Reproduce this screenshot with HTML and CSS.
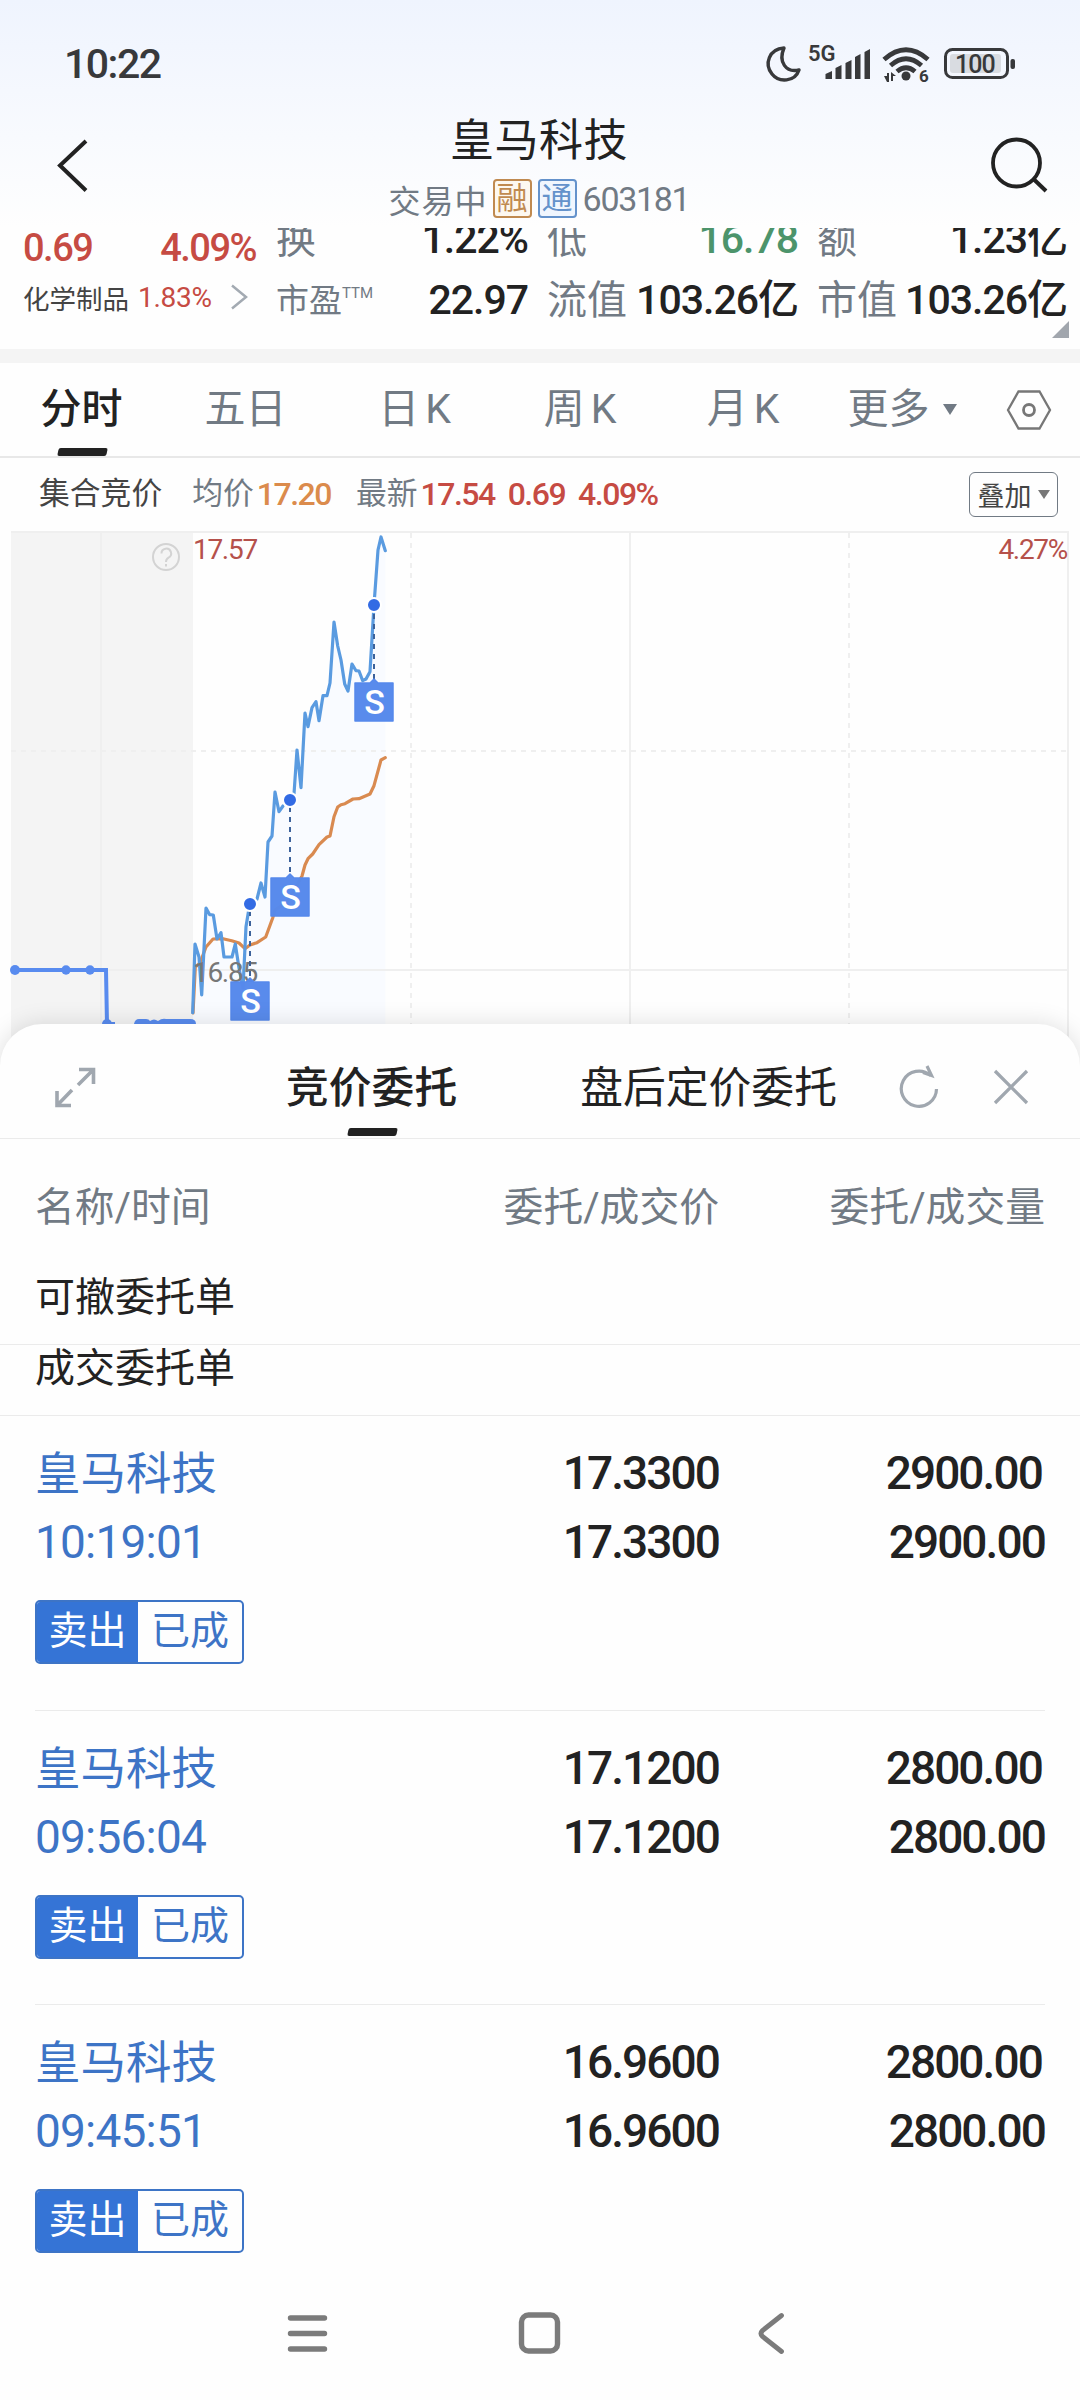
FILE: index.html
```html
<!DOCTYPE html>
<html lang="zh-CN">
<head>
    <meta charset="UTF-8">
    <meta name="viewport" content="width=device-width, initial-scale=1.0">
    <title>皇马科技 603181</title>
    <link rel="stylesheet" href="styles.css">
</head>
<body>
<div class="phone">
    <header class="top">
        <div class="status">
            <span class="clock">10:22</span>
            <svg class="status-icons" width="256" height="44" viewBox="762 41 256 44">
                <path d="M784 47c-6 14 2 25 15 22c-4 12-20 13-27 4c-8-10-3-25 12-26z" fill="none" stroke="#38393b" stroke-width="3.4" stroke-linejoin="round"/>
                <text x="808" y="60" class="net">5G</text>
                <g fill="#38393b">
                    <path d="M825.500 78v-5l6.500-3v8zM835.500 78v-11l6-3v14zM845.500 78v-16l6-3v19zM855 78v-22l5.500-3v25zM864.500 78v-27l5.500-3v30z"/>
                    <circle cx="906" cy="75" r="4.500"/>
                    <path d="M884 75h3v-3h2v9h-2zM891 80v-9l5 4h-3v5z"/>
                    <rect x="1010.500" y="58" width="4.500" height="10" rx="2"/>
                </g>
                <g fill="none" stroke="#38393b" stroke-width="4.800">
                    <path d="M884 58.500Q906 39 928 58.500"/>
                    <path d="M890.500 64.500Q906 51 921.500 64.500"/>
                    <path d="M897 70.500Q906 63 915 70.500"/>
                </g>
                <text x="919" y="81" class="gen">6</text>
                <rect x="945.500" y="48.500" width="62" height="28" rx="7" fill="none" stroke="#38393b" stroke-width="3"/>
                <rect x="950" y="53" width="51" height="19" rx="3" fill="#d9dce1"/>
                <text x="955" y="71.500" class="batt">100</text>
            </svg>
        </div>
        <div class="titlebar">
            <svg class="back" width="34" height="56" viewBox="56 138 34 56"><path d="M86 141L60 165.500L86 190.500" fill="none" stroke="#222" stroke-width="4"/></svg>
            <div class="title">
                <h1>皇马科技</h1>
                <p>交易中<i class="tag rong">融</i><i class="tag tong">通</i><span class="code">603181</span></p>
            </div>
            <svg class="search" width="60" height="60" viewBox="988 135 60 60"><circle cx="1016.500" cy="163" r="23.500" fill="none" stroke="#222" stroke-width="3.800"/><path d="M1034 179.500L1046 191" stroke="#222" stroke-width="4"/></svg>
        </div>
    </header>

    <section class="quote">
        <div class="change">
            <div class="change-row red"><b>0.69</b><b>4.09%</b></div>
            <div class="sector">
                <span>化学制品</span><em class="red">1.83%</em>
                <svg width="18" height="26" viewBox="0 0 18 26"><path d="M2 1.500L16 13L2 24.500" fill="none" stroke="#a3aab2" stroke-width="2.500"/></svg>
            </div>
        </div>
        <dl class="stats">
            <div><dt>换</dt><dd>1.22%</dd></div>
            <div><dt>低</dt><dd class="green">16.78</dd></div>
            <div><dt>额</dt><dd>1.23亿</dd></div>
            <div><dt class="small">市盈<sup>TTM</sup></dt><dd>22.97</dd></div>
            <div><dt>流值</dt><dd>103.26亿</dd></div>
            <div><dt>市值</dt><dd>103.26亿</dd></div>
        </dl>
        <i class="corner"></i>
    </section>

    <nav class="tabs">
        <a class="active">分时</a>
        <a>五日</a>
        <a>日<s></s>K</a>
        <a>周<s></s>K</a>
        <a>月<s></s>K</a>
        <a class="more">更多<i class="caret"></i></a>
        <svg width="46" height="42" viewBox="0 0 46 42" fill="none" stroke="#777" stroke-width="2.300"><path d="M2 21L12.500 2.500H33.500L44 21L33.500 39.500H12.500Z"/><circle cx="23" cy="21" r="5.500" stroke-width="2.800"/></svg>
    </nav>

    <div class="info">
        <span class="dark">集合竞价</span>
        <span>均价</span><b class="orange">17.20</b>
        <span>最新</span><b class="red">17.54</b><b class="red">0.69</b><b class="red">4.09%</b>
        <button class="overlay">叠加<i class="caret"></i></button>
    </div>

    <svg class="chart" width="1080" height="536" viewBox="0 530 1080 536">
        <rect x="11" y="532" width="182" height="534" fill="#f4f4f4"/>
        <path d="M193 1066V1013L195 944L199 957L201.700 995L206 908L213 915L217 939L224 957H232L235 944L243 988L246 927L250 904L257 899L261 883L265 897L268 842L272 836L275 792L279 812L290 800L294 794L297 750L301 788L305 713L308 727L312 708L316 702L319 721L323 696H327L330 683L334 622L338 646L348 691L352 664L363 681L370 672L374 605L378 550L381 537L385.300 551V1066Z" fill="#f9fbff"/>
        <!-- grid -->
        <g stroke="#efefef" stroke-width="2" fill="none">
            <path d="M11 532H1068V1066M101 532V1066M630 532V1066M11 970H1068"/>
            <path d="M411 533V1066M849 533V1066M11 751H1068" stroke-dasharray="5 5"/>
        </g>
        <g fill="none" stroke="#d3d3d3" stroke-width="2"><circle cx="166" cy="557" r="13"/><path d="M161.500 553.500a4.800 4.800 0 1 1 7 4.200q-2.500 1.500-2.500 4.300M166 564v2.500"/></g>
        <text x="193" y="559" class="axis up">17.57</text>
        <text x="1067" y="559" text-anchor="end" class="axis up">4.27%</text>
        <!-- call auction -->
        <g fill="#588bef">
            <path d="M11 970H106L107 1024" fill="none" stroke="#588bef" stroke-width="4"/>
            <circle cx="15" cy="970" r="5"/><circle cx="66" cy="970" r="4.700"/><circle cx="90" cy="970" r="4.700"/>
            <circle cx="107" cy="1024" r="5"/>
            <path d="M134 1024q1-5 5-5h7q3 0 4 2q4-3 8 0q4-3 8-2h24q6 0 6 5zM109 1022h6v2h-6z"/>
        </g>
        <polyline class="avg" points="193,1013 195.300,967 200,963 206,947 213,939 223,938.700 231.700,940.700 239,943 245,948.700 250,945 257,942.700 265.700,937 272.700,918 275,910 287,902 297,885 302,876 305,865 308,858.700 312.700,854 319,844.700 327,837 330,836 334,816.700 337.700,807 341,804.700 345,803.700 353,799 359,798.700 370,794 374,785.700 381,760 385.300,757.700"/>
        <polyline class="price" points="192.700,1012.700 195,944 199,957 201.700,995 206,908 209.700,914.700 213.300,915 217,939 221,932.700 224,957 232,957 235.300,944 239,968 243,988 246,926.700 249.700,904"/>
        <polyline class="price" points="257,899 261,883 265,897 268,842 272,836 275,792 279,811.700 283,806"/>
        <polyline class="price" points="294,794 297,750 301,787.700 305,713 308,726.700 312,707.700 316,701.700 319,720.700 323,695.700 327,695.700 330,683 334,622 337.700,646 341,660 344.700,684 348,691 352,664 356,670.700 359,671 362.700,680.700 366,679 370,671.700 374,605 378,550 381,537 385.300,550.700"/>
        <text x="193" y="982" class="axis">16.85</text>
        <!-- sell markers -->
        <g class="mark">
            <path d="M374 614V680M290 807V876M250 911V979"/>
            <circle cx="374" cy="605" r="7"/><circle cx="290" cy="800" r="7"/><circle cx="250" cy="904" r="7"/>
            <path class="flag" d="M355 683H370L374 679L378 683H393V721H355ZM271 878H286L290 874L294 878H309V916H271ZM231 982H246L250 978L254 982H269V1020H231Z"/>
            <text x="374.500" y="714">S</text><text x="290.500" y="909">S</text><text x="250.500" y="1013">S</text>
        </g>
    </svg>

    <section class="sheet">
        <div class="sheet-head">
            <svg class="expand" width="42" height="42" viewBox="54 1066 42 42" fill="none" stroke="#a0a7af" stroke-width="3.600"><path d="M79 1069.500H93.500V1084M93 1070L78 1085M57 1091V1105.500H71M57.500 1105L72 1090"/></svg>
            <span class="sheet-tab active">竞价委托</span>
            <span class="sheet-tab">盘后定价委托</span>
            <svg class="refresh" width="42" height="46" viewBox="898 1064 42 46" fill="none" stroke="#a0a7af" stroke-width="3.200"><path d="M936.500 1089A17.600 17.600 0 1 1 930.500 1075.500M927 1066L931.500 1075.500L923 1072.500"/></svg>
            <svg class="close" width="38" height="38" viewBox="0 0 38 38"><path d="M3 3L35 35M35 3L3 35" stroke="#a0a7af" stroke-width="3.300"/></svg>
        </div>
        <div class="cols"><span>名称/时间</span><span>委托/成交价</span><span>委托/成交量</span></div>
        <h2 class="group first">可撤委托单</h2>
        <h2 class="group">成交委托单</h2>

        <div class="order">
            <div class="who"><strong>皇马科技</strong><time>10:19:01</time><div class="badge"><b>卖出</b><span>已成</span></div></div>
            <div class="val"><span>17.3300</span><span>17.3300</span></div>
            <div class="val qty"><span>2900.00</span><span>2900.00</span></div>
        </div>
        <div class="order">
            <div class="who"><strong>皇马科技</strong><time>09:56:04</time><div class="badge"><b>卖出</b><span>已成</span></div></div>
            <div class="val"><span>17.1200</span><span>17.1200</span></div>
            <div class="val qty"><span>2800.00</span><span>2800.00</span></div>
        </div>
        <div class="order">
            <div class="who"><strong>皇马科技</strong><time>09:45:51</time><div class="badge"><b>卖出</b><span>已成</span></div></div>
            <div class="val"><span>16.9600</span><span>16.9600</span></div>
            <div class="val qty"><span>2800.00</span><span>2800.00</span></div>
        </div>
    </section>

    <footer class="navbar">
        <svg width="500" height="50" viewBox="286 2308 500 50" fill="none" stroke="#7b7b7b" stroke-width="5.400" stroke-linecap="round">
            <path d="M290.500 2318H324.500M290.500 2333.500H324.500M290.500 2349H324.500"/>
            <rect x="521.500" y="2315" width="36" height="36" rx="7"/>
            <path d="M781.500 2315.500L762.500 2330.500Q759.500 2333.500 762.500 2336.500L781.500 2351.500" stroke-width="4.800"/>
        </svg>
    </footer>
</div>
</body>
</html>
```
FILE: styles.css
```css
*{
    box-sizing: border-box;
    margin: 0;
    padding: 0;
}
body{
    font-family: Roboto, "Noto Sans CJK SC", sans-serif;
    color: #222;
    background: #fefefe;
}
i, em{
    font-style: normal;
}
svg{
    display: block;
    flex: none;
}
.phone{
    width: 1080px;
    height: 2400px;
    overflow: hidden;
    display: flex;
    flex-direction: column;
}
.red{ color: #c64b43; }
.green{ color: #4c946b; }
.orange{ color: #db8b4c; }

/* status bar and title */
.top{
    height: 228px;
    flex: none;
    background: linear-gradient(#eff4fe, #fefefe);
}
.status{
    height: 102px;
    padding: 25px 62px 0 64px;
    display: flex;
    align-items: center;
    justify-content: space-between;
}
.clock{
    font-size: 41px;
    font-weight: 500;
    letter-spacing: -1.500px;
    color: #38393b;
}
.net{
    font: 600 22px Roboto, sans-serif;
    fill: #38393b;
}
.gen{
    font: 700 17px Roboto, sans-serif;
    fill: #38393b;
}
.batt{
    font: 500 25px Roboto, sans-serif;
    fill: #38393b;
    letter-spacing: -1px;
}
.titlebar{
    height: 126px;
    padding: 0 32px 0 56px;
    display: flex;
    justify-content: space-between;
}
.back{
    margin-top: 36px;
}
.search{
    margin-top: 33px;
}
.title{
    padding-top: 13px;
    text-align: center;
}
.title h1{
    font-size: 44px;
    font-weight: 400;
    line-height: 52px;
    letter-spacing: .5px;
}
.title p{
    display: flex;
    align-items: center;
    height: 63px;
    font-size: 32px;
    letter-spacing: 1px;
    color: #717a84;
}
.tag{
    width: 39px;
    height: 39px;
    border: 2px solid;
    border-radius: 4px;
    font-size: 31px;
    line-height: 35px;
    letter-spacing: 0;
    text-align: center;
}
.rong{
    margin-left: 5px;
    color: #c08a50;
    background: #fdf8f0;
}
.tong{
    margin-left: 6px;
    color: #6492cb;
    background: #f0f6fe;
}
.code{
    font-size: 34px;
    letter-spacing: -1.3px;
    margin-left: 6px;
}

/* quote figures, scrolled partly under the title */
.quote{
    position: relative;
    height: 121px;
    flex: none;
    overflow: hidden;
    display: flex;
    padding-left: 23px;
}
.change{
    width: 253px;
}
.change-row{
    height: 40px;
    width: 233px;
    display: flex;
    justify-content: space-between;
    font-size: 38px;
    line-height: 41px;
    letter-spacing: -1.500px;
}
.change-row b{
    font-weight: 500;
}
.sector{
    display: flex;
    align-items: center;
    height: 58px;
    font-size: 26.500px;
    color: #444;
}
.sector em{
    font-size: 28px;
    letter-spacing: -.3px;
    margin-left: 9px;
    width: 92px;
}
.stats{
    display: grid;
    grid-template-columns: 252px 251px 250px;
    grid-auto-rows: 61px;
    column-gap: 19px;
    margin-top: -19px;
    line-height: 61px;
}
.stats div{
    display: flex;
    justify-content: space-between;
    white-space: nowrap;
}
.stats dt{
    font-size: 40px;
    color: #717a84;
}
.stats dt.small{
    font-size: 33px;
}
.stats sup{
    font-size: 15px;
    vertical-align: 14px;
    line-height: 0;
}
.stats dd{
    font-size: 41px;
    font-weight: 500;
    letter-spacing: -1px;
}
.corner{
    position: absolute;
    right: 11px;
    bottom: 11px;
    border-left: 17px solid transparent;
    border-bottom: 17px solid #a1a6ad;
}

/* period tabs */
.tabs{
    height: 109px;
    flex: none;
    border-top: 14px solid #f4f4f4;
    border-bottom: 2px solid #e8e8e8;
    padding: 0 28px 0 0;
    display: grid;
    grid-template-columns: 163px 165px 173px 158px 168px 150px 1fr;
    align-items: center;
    justify-items: center;
    font-size: 41px;
    color: #717a84;
    line-height: 93px;
}
.tabs a{
    position: relative;
}
.tabs s{
    display: inline-block;
    width: 6px;
}
.tabs .active{
    color: #222;
    font-weight: 500;
}
.tabs .active::after, .sheet-tab.active::after{
    content: "";
    position: absolute;
    left: 50%;
    bottom: 0;
    width: 49px;
    height: 8px;
    margin-left: -24px;
    background: #222;
    border-radius: 2px;
    transform: skewX(-12deg);
}
.tabs svg{
    justify-self: end;
}
.more{
    display: flex;
    align-items: center;
}
.caret{
    border: 7px solid transparent;
    border-top: 11px solid #717a84;
    border-bottom: 0;
    margin-left: 12px;
}
.more .caret{
    margin-left: 13px;
}

.info{
    height: 72px;
    flex: none;
    display: flex;
    align-items: center;
    padding: 0 22px 0 39px;
    font-size: 30.800px;
    line-height: 70px;
    color: #717a84;
}
.info .dark{
    color: #444;
    margin-right: 30px;
}
.info b{
    font-size: 32px;
    font-weight: 500;
    letter-spacing: -1.500px;
    margin-left: 3px;
}
.info .orange{
    margin-right: 25px;
}
.info .red + .red{
    margin-left: 13px;
}
.overlay{
    margin-left: auto;
    width: 89px;
    height: 45px;
    display: flex;
    align-items: center;
    justify-content: center;
    border: 1.500px solid #717a84;
    border-radius: 6px;
    background: none;
    font: 27px Roboto, "Noto Sans CJK SC", sans-serif;
    color: #444;
}
.overlay .caret{
    margin-left: 6px;
    border-width: 9px 6px 0;
    border-top-color: #777;
}

/* intraday chart */
.axis{
    font: 28px Roboto, sans-serif;
    letter-spacing: -1.300px;
    fill: #777;
}
.up{
    fill: #b5514b;
}
.avg, .price{
    fill: none;
    stroke-width: 3.200;
    stroke-linejoin: round;
    stroke-linecap: round;
}
.avg{ stroke: #d98a50; }
.price{ stroke: #5a9be0; }
.mark path{
    stroke: #3c629b;
    stroke-width: 2;
    stroke-dasharray: 5 5;
}
.mark circle{
    fill: #336be4;
    stroke: #fff;
    stroke-width: 2;
}
.mark .flag{
    fill: #5689ec;
    fill-opacity: .98;
    stroke: #5689ec;
    stroke-width: 1.500;
    stroke-dasharray: none;
    stroke-linejoin: round;
}
.mark text{
    font: 500 34px Roboto, sans-serif;
    fill: #fff;
    text-anchor: middle;
}

/* order sheet */
.sheet{
    position: relative;
    flex: none;
    margin-top: -42px;
    height: 1254px;
    background: #fefefe;
    border-radius: 42px 42px 0 0;
    box-shadow: 0 0 24px rgba(0,0,0,.13);
}
.sheet-head{
    height: 115px;
    border-bottom: 1px solid #ebebeb;
    display: flex;
    align-items: center;
    padding: 11px 50px 0 54px;
    font-size: 42.800px;
}
.sheet-tab{
    position: relative;
    line-height: 80px;
    padding-top: 3px;
}
.sheet-tab.active{
    font-weight: 500;
    margin: 0 123px 0 190px;
}
.sheet-tab.active::after{
    bottom: -8px;
}
.refresh{
    margin-left: 61px;
}
.close{
    margin-left: auto;
}
.cols{
    display: grid;
    grid-template-columns: 300px 384px 326px;
    padding: 39px 35px 0;
    height: 126px;
    line-height: 60px;
    font-size: 39.800px;
    color: #717a84;
}
.cols span + span{
    text-align: right;
}
.group{
    height: 71px;
    line-height: 48px;
    padding-left: 35px;
    font-size: 40px;
    font-weight: 400;
    border-bottom: 1px solid #ebebeb;
}
.group.first{
    height: 80px;
    line-height: 66px;
}
.order{
    height: 294.500px;
    margin: 0 35px;
    display: grid;
    grid-template-columns: 300px 384px 326px;
    padding-top: 23px;
    border-bottom: 1px solid #ebebeb;
}
.order:last-child{
    border-bottom: 0;
}
.who{
    color: #3d74c6;
}
.who strong, .who time, .val span{
    display: block;
    height: 69px;
    line-height: 69px;
}
.who strong{
    font-size: 45.500px;
    font-weight: 400;
    padding-top: 1px;
}
.who time{
    font-size: 46px;
    letter-spacing: -.8px;
}
.badge{
    display: flex;
    width: 209px;
    height: 64px;
    margin-top: 23px;
    border: 2px solid #3d74c6;
    border-radius: 5px;
    font-size: 39px;
    line-height: 58px;
    text-align: center;
    overflow: hidden;
}
.badge b{
    width: 101px;
    background: #3574d6;
    color: #fff;
    font-weight: 400;
}
.badge span{
    flex: 1;
}
.val{
    text-align: right;
    font-size: 46px;
    font-weight: 500;
    letter-spacing: -1.900px;
}
.qty span:first-child{
    padding-right: 3px;
}

.navbar{
    position: relative;
    flex: 1;
    padding: 30px 0 0 286px;
    background: #fefefe;
}
```
